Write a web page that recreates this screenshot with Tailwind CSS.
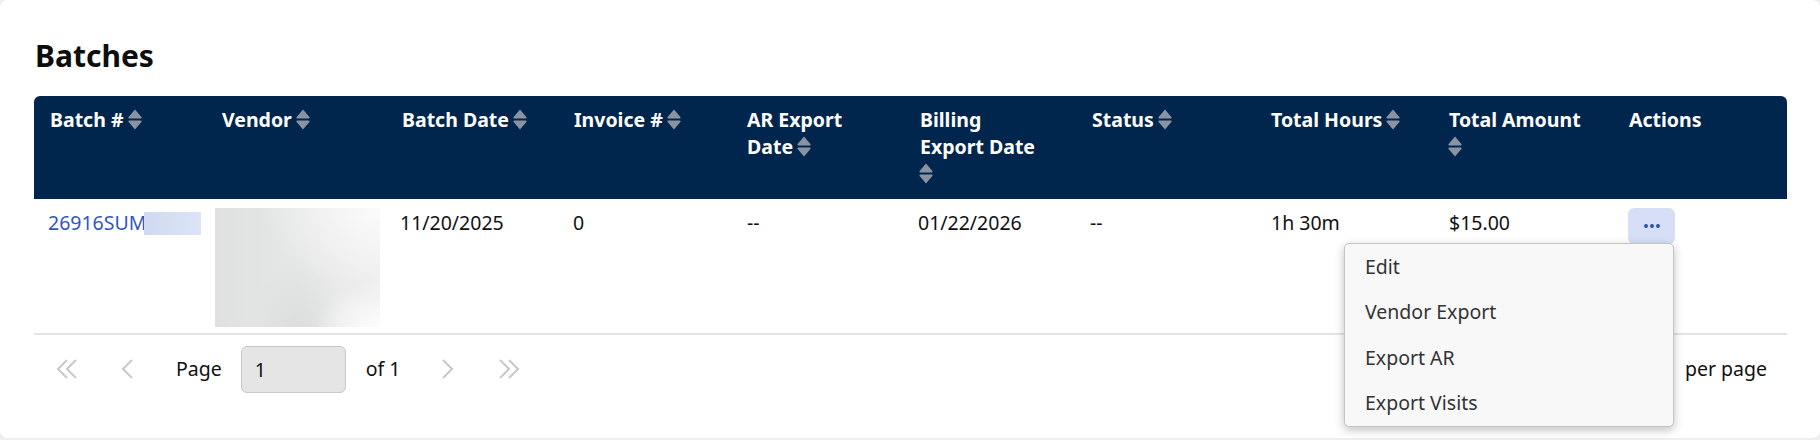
<!DOCTYPE html>
<html lang="en">
<head>
  <meta charset="UTF-8">
  <title>Batches</title>
  <script src="https://cdn.jsdelivr.net/npm/@tailwindcss/browser@4"></script>
</head>
<body class="bg-[#efefef] h-[440px] overflow-hidden font-['Noto_Sans',sans-serif] text-[19.5px] text-[#111]">
  <div class="bg-white h-[438px] rounded-lg pl-[34px] pr-[33px] pt-[34px]">
    <h1 class="text-[30px] leading-[44px] font-bold text-[#0d0d0d] pl-px">Batches</h1>
    <div class="mt-[18px]">
      <table class="w-[1753px] table-fixed border-collapse">
        <colgroup>
          <col class="w-[172px]"><col class="w-[181px]"><col class="w-[171px]"><col class="w-[173px]"><col class="w-[173px]">
          <col class="w-[172px]"><col class="w-[179px]"><col class="w-[179px]"><col class="w-[180px]"><col class="w-[173px]">
        </colgroup>
        <thead>
          <tr class="bg-[#00264d] text-white text-left align-top h-[103px] text-[19.5px] leading-[27px] font-bold">
            <th class="pl-4 pr-2 pt-[10px] rounded-tl-md font-bold">Batch # <svg class="inline-block w-[14px] h-[21px] -ml-px -mt-1 align-middle" viewBox="0 0 13 20"><path fill="#8993a3" d="M6.5 0.5 12.6 7.6C13 8.2 12.7 9 12 9H1C.3 9 0 8.2.4 7.6ZM1 11H12C12.7 11 13 11.8 12.6 12.4L6.5 19.5.4 12.4C0 11.8.3 11 1 11Z"/></svg></th>
            <th class="pl-4 pr-2 pt-[10px] font-bold">Vendor <svg class="inline-block w-[14px] h-[21px] -ml-px -mt-1 align-middle" viewBox="0 0 13 20"><path fill="#8993a3" d="M6.5 0.5 12.6 7.6C13 8.2 12.7 9 12 9H1C.3 9 0 8.2.4 7.6ZM1 11H12C12.7 11 13 11.8 12.6 12.4L6.5 19.5.4 12.4C0 11.8.3 11 1 11Z"/></svg></th>
            <th class="pl-[15px] pr-2 pt-[10px] font-bold">Batch Date <svg class="inline-block w-[14px] h-[21px] -ml-px -mt-1 align-middle" viewBox="0 0 13 20"><path fill="#8993a3" d="M6.5 0.5 12.6 7.6C13 8.2 12.7 9 12 9H1C.3 9 0 8.2.4 7.6ZM1 11H12C12.7 11 13 11.8 12.6 12.4L6.5 19.5.4 12.4C0 11.8.3 11 1 11Z"/></svg></th>
            <th class="pl-4 pr-2 pt-[10px] font-bold">Invoice # <svg class="inline-block w-[14px] h-[21px] -ml-px -mt-1 align-middle" viewBox="0 0 13 20"><path fill="#8993a3" d="M6.5 0.5 12.6 7.6C13 8.2 12.7 9 12 9H1C.3 9 0 8.2.4 7.6ZM1 11H12C12.7 11 13 11.8 12.6 12.4L6.5 19.5.4 12.4C0 11.8.3 11 1 11Z"/></svg></th>
            <th class="pl-4 pr-2 pt-[10px] font-bold">AR Export<br>Date <svg class="inline-block w-[14px] h-[21px] -ml-px -mt-1 align-middle" viewBox="0 0 13 20"><path fill="#8993a3" d="M6.5 0.5 12.6 7.6C13 8.2 12.7 9 12 9H1C.3 9 0 8.2.4 7.6ZM1 11H12C12.7 11 13 11.8 12.6 12.4L6.5 19.5.4 12.4C0 11.8.3 11 1 11Z"/></svg></th>
            <th class="pl-4 pr-2 pt-[10px] font-bold">Billing<br>Export Date<br><svg class="inline-block w-[14px] h-[21px] -ml-px -mt-1 align-middle" viewBox="0 0 13 20"><path fill="#8993a3" d="M6.5 0.5 12.6 7.6C13 8.2 12.7 9 12 9H1C.3 9 0 8.2.4 7.6ZM1 11H12C12.7 11 13 11.8 12.6 12.4L6.5 19.5.4 12.4C0 11.8.3 11 1 11Z"/></svg></th>
            <th class="pl-4 pr-2 pt-[10px] font-bold">Status <svg class="inline-block w-[14px] h-[21px] -ml-px -mt-1 align-middle" viewBox="0 0 13 20"><path fill="#8993a3" d="M6.5 0.5 12.6 7.6C13 8.2 12.7 9 12 9H1C.3 9 0 8.2.4 7.6ZM1 11H12C12.7 11 13 11.8 12.6 12.4L6.5 19.5.4 12.4C0 11.8.3 11 1 11Z"/></svg></th>
            <th class="pl-4 pr-2 pt-[10px] font-bold">Total Hours <svg class="inline-block w-[14px] h-[21px] -ml-px -mt-1 align-middle" viewBox="0 0 13 20"><path fill="#8993a3" d="M6.5 0.5 12.6 7.6C13 8.2 12.7 9 12 9H1C.3 9 0 8.2.4 7.6ZM1 11H12C12.7 11 13 11.8 12.6 12.4L6.5 19.5.4 12.4C0 11.8.3 11 1 11Z"/></svg></th>
            <th class="pl-[15px] pr-2 pt-[10px] font-bold">Total Amount<br><svg class="inline-block w-[14px] h-[21px] -ml-px -mt-1 align-middle" viewBox="0 0 13 20"><path fill="#8993a3" d="M6.5 0.5 12.6 7.6C13 8.2 12.7 9 12 9H1C.3 9 0 8.2.4 7.6ZM1 11H12C12.7 11 13 11.8 12.6 12.4L6.5 19.5.4 12.4C0 11.8.3 11 1 11Z"/></svg></th>
            <th class="pl-[15px] pr-2 pt-[10px] rounded-tr-md font-bold">Actions</th>
          </tr>
        </thead>
        <tbody>
          <tr class="align-top h-[135px] border-b-2 border-[#e4e4e4]">
            <td class="pl-[14px] pt-[10px]">
              <span class="relative block text-[#2f55c4] leading-[27px]">26916SUM<span class="absolute left-[96px] top-[3px] w-[57px] h-[23px] bg-gradient-to-r from-[#d0d9ef] to-[#dde4f6]"></span></span>
            </td>
            <td class="pl-[9px] pt-[9px] pb-[6px]">
              <div class="w-[165px] h-[119px] bg-[#e6e6e6] bg-[radial-gradient(ellipse_at_100%_0%,#fbfbfb_0%,transparent_50%),radial-gradient(ellipse_at_100%_100%,#fdfdfd_0%,transparent_28%),radial-gradient(ellipse_at_50%_100%,#dcdddd_0%,transparent_40%),linear-gradient(90deg,#dfe0e0,#ededed)]"></div>
            </td>
            <td class="pl-[13px] pt-[10px] leading-[27px]">11/20/2025</td>
            <td class="pl-[15px] pt-[10px] leading-[27px]">0</td>
            <td class="pl-[16px] pt-[10px] leading-[27px]">--</td>
            <td class="pl-[14px] pt-[10px] leading-[27px]">01/22/2026</td>
            <td class="pl-[14px] pt-[10px] leading-[27px]">--</td>
            <td class="pl-[16px] pt-[10px] leading-[27px]">1h 30m</td>
            <td class="pl-[15px] pt-[10px] leading-[27px]">$15.00</td>
            <td class="pl-[14px] pt-[9px]">
              <div class="relative">
                <button class="w-[47px] h-[36px] bg-[#d6dff5] rounded-md flex items-center justify-center gap-[2px]">
                  <span class="w-[4px] h-[4px] rounded-full bg-[#2f4fb5]"></span><span class="w-[4px] h-[4px] rounded-full bg-[#2f4fb5]"></span><span class="w-[4px] h-[4px] rounded-full bg-[#2f4fb5]"></span>
                </button>
                <div class="absolute right-[113px] top-[35px] w-[330px] h-[184px] bg-[#f8f8f8] border border-[#c4c4c4] rounded-[5px] shadow-[0_3px_10px_rgba(0,0,0,0.25)] flex flex-col justify-center text-[#333] z-10">
                  <a class="block pl-[20px] h-[45.5px] leading-[45.5px]">Edit</a>
                  <a class="block pl-[20px] h-[45.5px] leading-[44px]">Vendor Export</a>
                  <a class="block pl-[20px] h-[45.5px] leading-[45.5px]">Export AR</a>
                  <a class="block pl-[20px] h-[45.5px] leading-[44px]">Export Visits</a>
                </div>
              </div>
            </td>
          </tr>
        </tbody>
      </table>
      <div class="flex items-center justify-between h-[70px] pb-[2px] pr-[20px]">
        <div class="flex items-center">
          <svg class="ml-[22px] w-[22px] h-[20px]" viewBox="0 0 22 20" fill="none" stroke="#c8c8c8" stroke-width="2"><path d="M11 1 2 10l9 9M20 1l-9 9 9 9"/></svg>
          <svg class="ml-[43px] w-[12px] h-[20px]" viewBox="0 0 12 20" fill="none" stroke="#c8c8c8" stroke-width="2"><path d="M11 1 2 10l9 9"/></svg>
          <span class="ml-[43px]">Page</span>
          <input class="ml-[19px] w-[105px] h-[47px] px-[13px] bg-[#e5e5e5] border border-[#c8c8c8] rounded-md text-[19.5px] text-[#111]" value="1" disabled>
          <span class="ml-[20px]">of 1</span>
          <svg class="ml-[42px] w-[12px] h-[20px]" viewBox="0 0 12 20" fill="none" stroke="#c8c8c8" stroke-width="2"><path d="m1 1 9 9-9 9"/></svg>
          <svg class="ml-[44px] w-[22px] h-[20px]" viewBox="0 0 22 20" fill="none" stroke="#c8c8c8" stroke-width="2"><path d="m2 1 9 9-9 9M11 1l9 9-9 9"/></svg>
        </div>
        <span>per page</span>
      </div>
    </div>
  </div>
</body>
</html>
